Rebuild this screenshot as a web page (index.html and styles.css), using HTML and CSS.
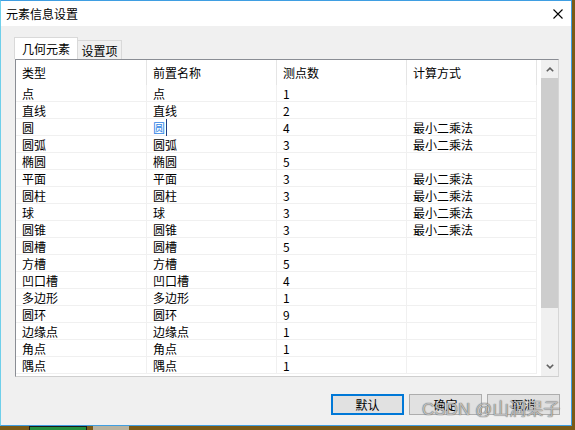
FILE: index.html
```html
<!DOCTYPE html>
<html lang="zh-CN">
<head>
<meta charset="utf-8">
<title>元素信息设置</title>
<link rel="stylesheet" href="styles.css">
</head>
<body>
<div class="window">
  <div class="titlebar">
    <span class="title">元素信息设置</span>
    <svg class="close" width="10" height="10" viewBox="0 0 10 10"><path d="M0.5 0.5 L9.5 9.5 M9.5 0.5 L0.5 9.5" stroke="#000" stroke-width="1.1" fill="none"/></svg>
  </div>
  <div class="body">
    <div class="tabs">
      <div class="tab active">几何元素</div>
      <div class="tab inactive">设置项</div>
    </div>
    <div class="list">
      <div class="grid">
        <div class="h">类型</div><div class="h">前置名称</div><div class="h">测点数</div><div class="h">计算方式</div>
        <div class="c">点</div><div class="c">点</div><div class="c">1</div><div class="c"></div>
        <div class="c">直线</div><div class="c">直线</div><div class="c">2</div><div class="c"></div>
        <div class="c">圆</div><div class="c"><span class="edit">圆</span></div><div class="c">4</div><div class="c">最小二乘法</div>
        <div class="c">圆弧</div><div class="c">圆弧</div><div class="c">3</div><div class="c">最小二乘法</div>
        <div class="c">椭圆</div><div class="c">椭圆</div><div class="c">5</div><div class="c"></div>
        <div class="c">平面</div><div class="c">平面</div><div class="c">3</div><div class="c">最小二乘法</div>
        <div class="c">圆柱</div><div class="c">圆柱</div><div class="c">3</div><div class="c">最小二乘法</div>
        <div class="c">球</div><div class="c">球</div><div class="c">3</div><div class="c">最小二乘法</div>
        <div class="c">圆锥</div><div class="c">圆锥</div><div class="c">3</div><div class="c">最小二乘法</div>
        <div class="c">圆槽</div><div class="c">圆槽</div><div class="c">5</div><div class="c"></div>
        <div class="c">方槽</div><div class="c">方槽</div><div class="c">5</div><div class="c"></div>
        <div class="c">凹口槽</div><div class="c">凹口槽</div><div class="c">4</div><div class="c"></div>
        <div class="c">多边形</div><div class="c">多边形</div><div class="c">1</div><div class="c"></div>
        <div class="c">圆环</div><div class="c">圆环</div><div class="c">9</div><div class="c"></div>
        <div class="c">边缘点</div><div class="c">边缘点</div><div class="c">1</div><div class="c"></div>
        <div class="c">角点</div><div class="c">角点</div><div class="c">1</div><div class="c"></div>
        <div class="c">隅点</div><div class="c">隅点</div><div class="c">1</div><div class="c"></div>
      </div>
      <div class="scrollbar">
        <div class="sb-btn sb-up"><svg width="8" height="5" viewBox="0 0 8 5"><path d="M0.8 4.3 L4 1.1 L7.2 4.3" stroke="#606060" stroke-width="1.6" fill="none"/></svg></div>
        <div class="thumb"></div>
        <div class="sb-btn sb-down"><svg width="8" height="5" viewBox="0 0 8 5"><path d="M0.8 0.7 L4 3.9 L7.2 0.7" stroke="#606060" stroke-width="1.6" fill="none"/></svg></div>
      </div>
    </div>
    <div class="buttons">
      <button class="btn default">默认</button>
      <button class="btn">确定</button>
      <button class="btn">取消</button>
    </div>
  </div>
  <div class="watermark">CSDN @山涧果子</div>
</div>
<div class="desk">
  <div class="desk-app"></div>
  <div class="desk-icon"></div>
</div>
</body>
</html>
```
FILE: styles.css
```css
html, body {
  margin: 0;
  padding: 0;
}
body {
  width: 575px;
  height: 430px;
  overflow: hidden;
  background: #7a5a16;
  font-family: "Noto Sans CJK SC", "Liberation Sans", sans-serif;
  font-size: 12px;
  color: #000;
}
.window {
  width: 572px;
  height: 426px;
  box-sizing: border-box;
  border: 1px solid #3f9ee2;
  border-left-color: #6fcfea;
  background: #f0f0f0;
  display: flex;
  flex-direction: column;
  position: relative;
}
.titlebar {
  height: 25px;
  flex: none;
  background: #fff;
  display: flex;
  align-items: center;
  justify-content: space-between;
  padding: 0 8px 0 5px;
}
.title {
  line-height: 25px;
}
.close {
  display: block;
}
.body {
  flex: 1;
  display: flex;
  flex-direction: column;
  padding: 11px 11px 0 13px;
}
.tabs {
  display: flex;
  align-items: flex-end;
  height: 22px;
}
.tab {
  box-sizing: border-box;
  border: 1px solid #d9d9d9;
  border-bottom: none;
  text-align: center;
}
.tab.active {
  width: 64px;
  height: 22px;
  background: #fff;
  line-height: 21px;
}
.tab.inactive {
  width: 44px;
  height: 19px;
  border-left: none;
  background: #f0f0f0;
  line-height: 19px;
}
.list {
  margin-left: 1px;
  width: 544px;
  height: 318px;
  box-sizing: border-box;
  border: 1px solid;
  border-color: #8a8d94 #d6d6d6 #cfcfcf #8a8d94;
  background: #fff;
  display: flex;
}
.grid {
  display: grid;
  grid-template-columns: 131px 130px 130px 130px;
  grid-template-rows: 25px;
  grid-auto-rows: 17px;
  align-content: start;
}
.h {
  box-sizing: border-box;
  border-right: 1px solid #e5e5e5;
  padding-left: 6px;
  line-height: 25px;
}
.c {
  box-sizing: border-box;
  border-right: 1px solid #f0f0f0;
  border-bottom: 1px solid #f0f0f0;
  padding-left: 6px;
  line-height: 17px;
  white-space: nowrap;
}
.edit {
  color: #2f86e6;
  border-right: 1px solid #1b3f86;
  padding-right: 1px;
}
.scrollbar {
  margin-left: auto;
  width: 17px;
  background: #f0f0f0;
  display: flex;
  flex-direction: column;
}
.sb-btn {
  height: 17px;
  display: flex;
  align-items: center;
  justify-content: center;
}
.sb-btn svg {
  display: block;
}
.sb-up {
  height: 18px;
}
.thumb {
  height: 230px;
  background: #cdcdcd;
}
.sb-down {
  margin-top: auto;
  height: 20px;
}
.buttons {
  display: flex;
  justify-content: flex-end;
  gap: 5px;
  margin-top: 17px;
}
.btn {
  width: 73px;
  height: 21px;
  box-sizing: border-box;
  margin: 0;
  padding: 0;
  border: 1px solid #adadad;
  background: #e1e1e1;
  font-family: inherit;
  font-size: 12px;
  color: #000;
  line-height: 19px;
  text-align: center;
}
.btn.default {
  border: 2px solid #0078d7;
  line-height: 17px;
}
.watermark {
  position: absolute;
  left: 421px;
  top: 399px;
  font-family: "Liberation Sans", "Noto Sans CJK SC", sans-serif;
  font-size: 17px;
  line-height: 20px;
  color: rgba(215, 215, 215, 0.8);
  text-shadow: 0 0 1px rgba(80, 80, 80, 0.95), 0 0 1px rgba(80, 80, 80, 0.6);
  white-space: nowrap;
  pointer-events: none;
}
.desk {
  height: 4px;
  display: flex;
  align-items: stretch;
}
.desk-app {
  margin-left: 29px;
  width: 56px;
  background: #238f3f;
  border-left: 1px solid #1a1a1a;
  border-right: 1px solid #1a1a1a;
  border-top: 1px solid #1a1a1a;
}
.desk-icon {
  margin-left: 6px;
  width: 36px;
  background: #b9b3a0;
}
```
